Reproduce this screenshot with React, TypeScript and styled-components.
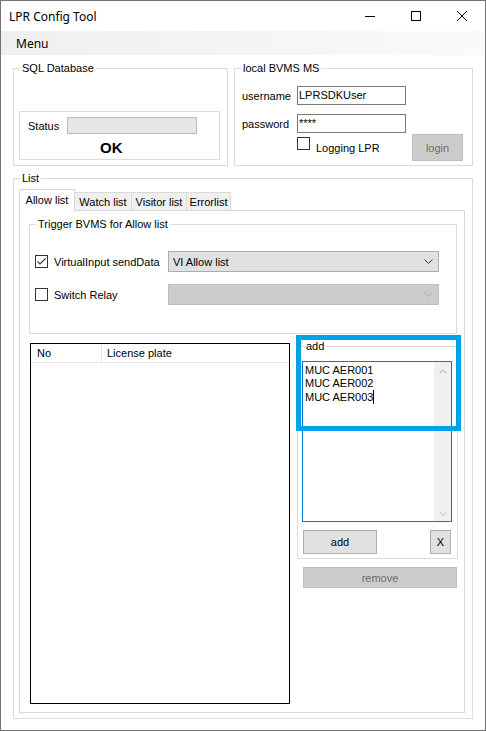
import styled, { createGlobalStyle } from 'styled-components'

const GlobalStyle = createGlobalStyle`
  html, body {
    margin: 0;
    padding: 0;
    background: #ffffff;
  }
  * {
    box-sizing: border-box;
  }
`

const Window = styled.div`
  width: 486px;
  height: 731px;
  border: 1px solid #747474;
  background: #ffffff;
  display: flex;
  flex-direction: column;
  font-family: 'Liberation Sans', Arial, sans-serif;
  font-size: 11px;
  color: #000000;
  overflow: hidden;
`

const TitleBar = styled.div`
  height: 30px;
  display: flex;
  align-items: center;
  flex-shrink: 0;
`

const Title = styled.div`
  padding-left: 8px;
  font-family: 'Noto Sans', 'Open Sans', sans-serif;
  font-size: 12px;
`

const CaptionButtons = styled.div`
  margin-left: auto;
  display: flex;
  height: 100%;
`

const CaptionButton = styled.div`
  width: 46px;
  height: 30px;
  display: flex;
  align-items: center;
  justify-content: center;
`

const MenuBar = styled.div`
  height: 24px;
  flex-shrink: 0;
  display: flex;
  align-items: center;
  padding-left: 15px;
  background: linear-gradient(to right, #efefef, #fafafa);
  font-family: 'Noto Sans', 'Open Sans', sans-serif;
  font-size: 12px;
`

const Client = styled.div`
  flex: 1;
  padding: 13px 0 0 12px;
`

const TopRow = styled.div`
  display: flex;
  gap: 6px;
`

const GroupBox = styled.div<{ $w: number; $h: number }>`
  width: ${p => p.$w}px;
  height: ${p => p.$h}px;
  border: 1px solid #dcdcdc;
  flex-shrink: 0;
`

const Legend = styled.div`
  display: block;
  width: fit-content;
  height: 13px;
  line-height: 13px;
  margin: -7px 0 0 6px;
  padding: 0 2px;
  background: #ffffff;
  white-space: nowrap;
`

const StatusBox = styled.div`
  width: 201px;
  height: 49px;
  margin: 36px 0 0 5px;
  border: 1px solid #dcdcdc;
`

const StatusRow = styled.div`
  display: flex;
  align-items: center;
  margin-top: 5px;
  padding-left: 8px;
`

const StatusLabel = styled.span`
  width: 39px;
`

const StatusField = styled.div`
  width: 130px;
  height: 17px;
  background: #e6e6e6;
  border: 1px solid #bcbcbc;
`

const OkText = styled.div`
  margin: 5px 0 0 80px;
  font-weight: bold;
  font-size: 15px;
  line-height: 18px;
`

const BvmsBody = styled.div`
  padding: 11px 0 0 7px;
`

const FieldRow = styled.div`
  display: flex;
  align-items: center;
  height: 19px;
  & + & {
    margin-top: 9px;
  }
`

const FieldLabel = styled.span`
  width: 55px;
`

const TextInput = styled.div`
  width: 109px;
  height: 19px;
  border: 1px solid #7a7a7a;
  padding-left: 1px;
  line-height: 17px;
  white-space: nowrap;
`

const BottomRow = styled.div`
  display: flex;
  align-items: flex-start;
  margin-top: 1px;
  padding-left: 55px;
`

const LoggingCheck = styled.div`
  width: 115px;
  display: flex;
  align-items: flex-start;
  gap: 6px;
  padding-top: 3px;
`

const LoggingLabel = styled.span`
  line-height: 13px;
  padding-top: 5px;
`

const CheckBox = styled.div`
  width: 13px;
  height: 13px;
  border: 1px solid #333333;
  background: #ffffff;
  flex-shrink: 0;
  display: flex;
`

const Button = styled.div<{ $w: number; $h: number; $disabled?: boolean }>`
  width: ${p => p.$w}px;
  height: ${p => p.$h}px;
  flex-shrink: 0;
  display: flex;
  align-items: center;
  justify-content: center;
  background: ${p => (p.$disabled ? '#cccccc' : '#e1e1e1')};
  border: 1px solid ${p => (p.$disabled ? '#bfbfbf' : '#adadad')};
  color: ${p => (p.$disabled ? '#6d6d6d' : '#000000')};
`

const ListGroup = styled(GroupBox)`
  margin-top: 12px;
`

const ListBody = styled.div`
  padding: 4px 0 0 5px;
`

const TabStrip = styled.div`
  display: flex;
  align-items: flex-end;
  height: 22px;
  margin-bottom: -1px;
  position: relative;
  z-index: 1;
`

const Tab = styled.div<{ $w: number; $active?: boolean }>`
  width: ${p => p.$w}px;
  height: ${p => (p.$active ? 22 : 19)}px;
  border: 1px solid #d9d9d9;
  border-bottom: ${p => (p.$active ? 'none' : '1px solid #d9d9d9')};
  background: ${p => (p.$active ? '#ffffff' : '#f0f0f0')};
  display: flex;
  align-items: center;
  justify-content: center;
  padding-bottom: ${p => (p.$active ? 1 : 0)}px;
  white-space: nowrap;
  & + & {
    margin-left: -1px;
  }
`

const TabPage = styled.div`
  width: 446px;
  height: 503px;
  border: 1px solid #d9d9d9;
  background: #ffffff;
`

const TriggerGroup = styled(GroupBox)`
  margin: 13px 0 0 9px;
`

const TriggerBody = styled.div`
  padding: 20px 0 0 5px;
`

const TriggerRow = styled.div`
  display: flex;
  align-items: center;
  height: 21px;
  & + & {
    margin-top: 12px;
  }
`

const CheckLabel = styled.div`
  width: 133px;
  display: flex;
  align-items: center;
  gap: 6px;
  white-space: nowrap;
`

const Combo = styled.div<{ $disabled?: boolean }>`
  width: 271px;
  height: 21px;
  display: flex;
  align-items: center;
  justify-content: space-between;
  padding: 0 5px 0 4px;
  background: ${p => (p.$disabled ? '#cccccc' : '#e1e1e1')};
  border: 1px solid ${p => (p.$disabled ? '#bfbfbf' : '#adadad')};
`

const LowerRow = styled.div`
  display: flex;
  align-items: flex-start;
  margin: 9px 0 0 10px;
`

const ListView = styled.div`
  width: 260px;
  height: 361px;
  border: 1px solid #000000;
  flex-shrink: 0;
`

const ListHeader = styled.div`
  height: 19px;
  display: flex;
  border-bottom: 1px solid #e5e5e5;
`

const HeaderCell = styled.div<{ $w?: number }>`
  width: ${p => (p.$w ? `${p.$w}px` : 'auto')};
  flex: ${p => (p.$w ? 'none' : '1')};
  display: flex;
  align-items: center;
  padding-left: ${p => (p.$w ? 6 : 5)}px;
  border-right: ${p => (p.$w ? '1px solid #e5e5e5' : 'none')};
`

const RightColumn = styled.div`
  position: relative;
  margin-left: 7px;
  padding-top: 3px;
  width: 161px;
`

const AddBody = styled.div`
  padding: 8px 0 0 4px;
`

const NoteBox = styled.div`
  width: 150px;
  height: 161px;
  border: 1px solid #0078d7;
  display: flex;
  background: #ffffff;
`

const NoteText = styled.div`
  flex: 1;
  padding: 2px 0 0 2px;
  line-height: 13px;
  white-space: nowrap;
`

const Caret = styled.span`
  display: inline-block;
  width: 1px;
  height: 14px;
  background: #000000;
  vertical-align: -3px;
`

const ScrollBar = styled.div`
  width: 17px;
  background: #f0f0f0;
  display: flex;
  flex-direction: column;
  justify-content: space-between;
  align-items: center;
  padding: 7px 0 5px;
`

const ButtonRow = styled.div`
  display: flex;
  justify-content: space-between;
  margin-top: 8px;
  padding: 0 6px 0 1px;
`

const RemoveButton = styled(Button)`
  margin: 8px 0 0 6px;
`

const Highlight = styled.div`
  position: absolute;
  top: -8px;
  left: -1px;
  width: 165px;
  height: 96px;
  border: 5px solid #00a2e8;
  pointer-events: none;
`

const Chevron = ({ color, w = 9 }: { color: string; w?: number }) => (
  <svg width={w} height={5} viewBox={`0 0 ${w} 5`}>
    <polyline points={`0.5,0.5 ${w / 2},4.5 ${w - 0.5},0.5`} fill="none" stroke={color} strokeWidth={1} />
  </svg>
)

const ChevronUp = ({ color }: { color: string }) => (
  <svg width={8} height={5} viewBox="0 0 8 5">
    <polyline points="0.5,4.5 4,1 7.5,4.5" fill="none" stroke={color} strokeWidth={1.2} />
  </svg>
)

const Check = ({ checked }: { checked?: boolean }) => (
  <CheckBox>
    {checked && (
      <svg width={11} height={11} viewBox="0 0 11 11">
        <polyline points="1.5,5.5 4,8 9.5,2.5" fill="none" stroke="#333333" strokeWidth={1.1} />
      </svg>
    )}
  </CheckBox>
)

export default function App() {
  return (
    <>
      <GlobalStyle />
      <Window>
        <TitleBar>
          <Title>LPR Config Tool</Title>
          <CaptionButtons>
            <CaptionButton>
              <svg width={10} height={10} viewBox="0 0 10 10">
                <line x1={0} y1={5.5} x2={10} y2={5.5} stroke="#000" strokeWidth={1} />
              </svg>
            </CaptionButton>
            <CaptionButton>
              <svg width={10} height={10} viewBox="0 0 10 10">
                <rect x={0.5} y={0.5} width={9} height={9} fill="none" stroke="#000" strokeWidth={1} />
              </svg>
            </CaptionButton>
            <CaptionButton>
              <svg width={10} height={10} viewBox="0 0 10 10">
                <path d="M0 0 L10 10 M10 0 L0 10" stroke="#000" strokeWidth={1} />
              </svg>
            </CaptionButton>
          </CaptionButtons>
        </TitleBar>
        <MenuBar>Menu</MenuBar>
        <Client>
          <TopRow>
            <GroupBox $w={215} $h={98}>
              <Legend>SQL Database</Legend>
              <StatusBox>
                <StatusRow>
                  <StatusLabel>Status</StatusLabel>
                  <StatusField />
                </StatusRow>
                <OkText>OK</OkText>
              </StatusBox>
            </GroupBox>
            <GroupBox $w={239} $h={98}>
              <Legend>local BVMS MS</Legend>
              <BvmsBody>
                <FieldRow>
                  <FieldLabel>username</FieldLabel>
                  <TextInput>LPRSDKUser</TextInput>
                </FieldRow>
                <FieldRow>
                  <FieldLabel>password</FieldLabel>
                  <TextInput>****</TextInput>
                </FieldRow>
                <BottomRow>
                  <LoggingCheck>
                    <Check />
                    <LoggingLabel>Logging LPR</LoggingLabel>
                  </LoggingCheck>
                  <Button $w={51} $h={27} $disabled>login</Button>
                </BottomRow>
              </BvmsBody>
            </GroupBox>
          </TopRow>

          <ListGroup $w={460} $h={541}>
            <Legend>List</Legend>
            <ListBody>
              <TabStrip>
                <Tab $w={56} $active>Allow list</Tab>
                <Tab $w={58}>Watch list</Tab>
                <Tab $w={56}>Visitor list</Tab>
                <Tab $w={45}>Errorlist</Tab>
              </TabStrip>
              <TabPage>
                <TriggerGroup $w={428} $h={110}>
                  <Legend>Trigger BVMS for Allow list</Legend>
                  <TriggerBody>
                    <TriggerRow>
                      <CheckLabel>
                        <Check checked />
                        VirtualInput sendData
                      </CheckLabel>
                      <Combo>
                        <span>VI Allow list</span>
                        <Chevron color="#333333" />
                      </Combo>
                    </TriggerRow>
                    <TriggerRow>
                      <CheckLabel>
                        <Check />
                        Switch Relay
                      </CheckLabel>
                      <Combo $disabled>
                        <span />
                        <Chevron color="#a6a6a6" />
                      </Combo>
                    </TriggerRow>
                  </TriggerBody>
                </TriggerGroup>

                <LowerRow>
                  <ListView>
                    <ListHeader>
                      <HeaderCell $w={71}>No</HeaderCell>
                      <HeaderCell>License plate</HeaderCell>
                    </ListHeader>
                  </ListView>
                  <RightColumn>
                    <GroupBox $w={161} $h={213}>
                      <Legend>add</Legend>
                      <AddBody>
                        <NoteBox>
                          <NoteText>
                            <div>MUC AER001</div>
                            <div>MUC AER002</div>
                            <div>
                              MUC AER003
                              <Caret />
                            </div>
                          </NoteText>
                          <ScrollBar>
                            <ChevronUp color="#c2c2c2" />
                            <Chevron color="#c2c2c2" w={8} />
                          </ScrollBar>
                        </NoteBox>
                        <ButtonRow>
                          <Button $w={74} $h={24}>add</Button>
                          <Button $w={21} $h={24}>X</Button>
                        </ButtonRow>
                      </AddBody>
                    </GroupBox>
                    <RemoveButton $w={154} $h={21} $disabled>remove</RemoveButton>
                    <Highlight />
                  </RightColumn>
                </LowerRow>
              </TabPage>
            </ListBody>
          </ListGroup>
        </Client>
      </Window>
    </>
  )
}
